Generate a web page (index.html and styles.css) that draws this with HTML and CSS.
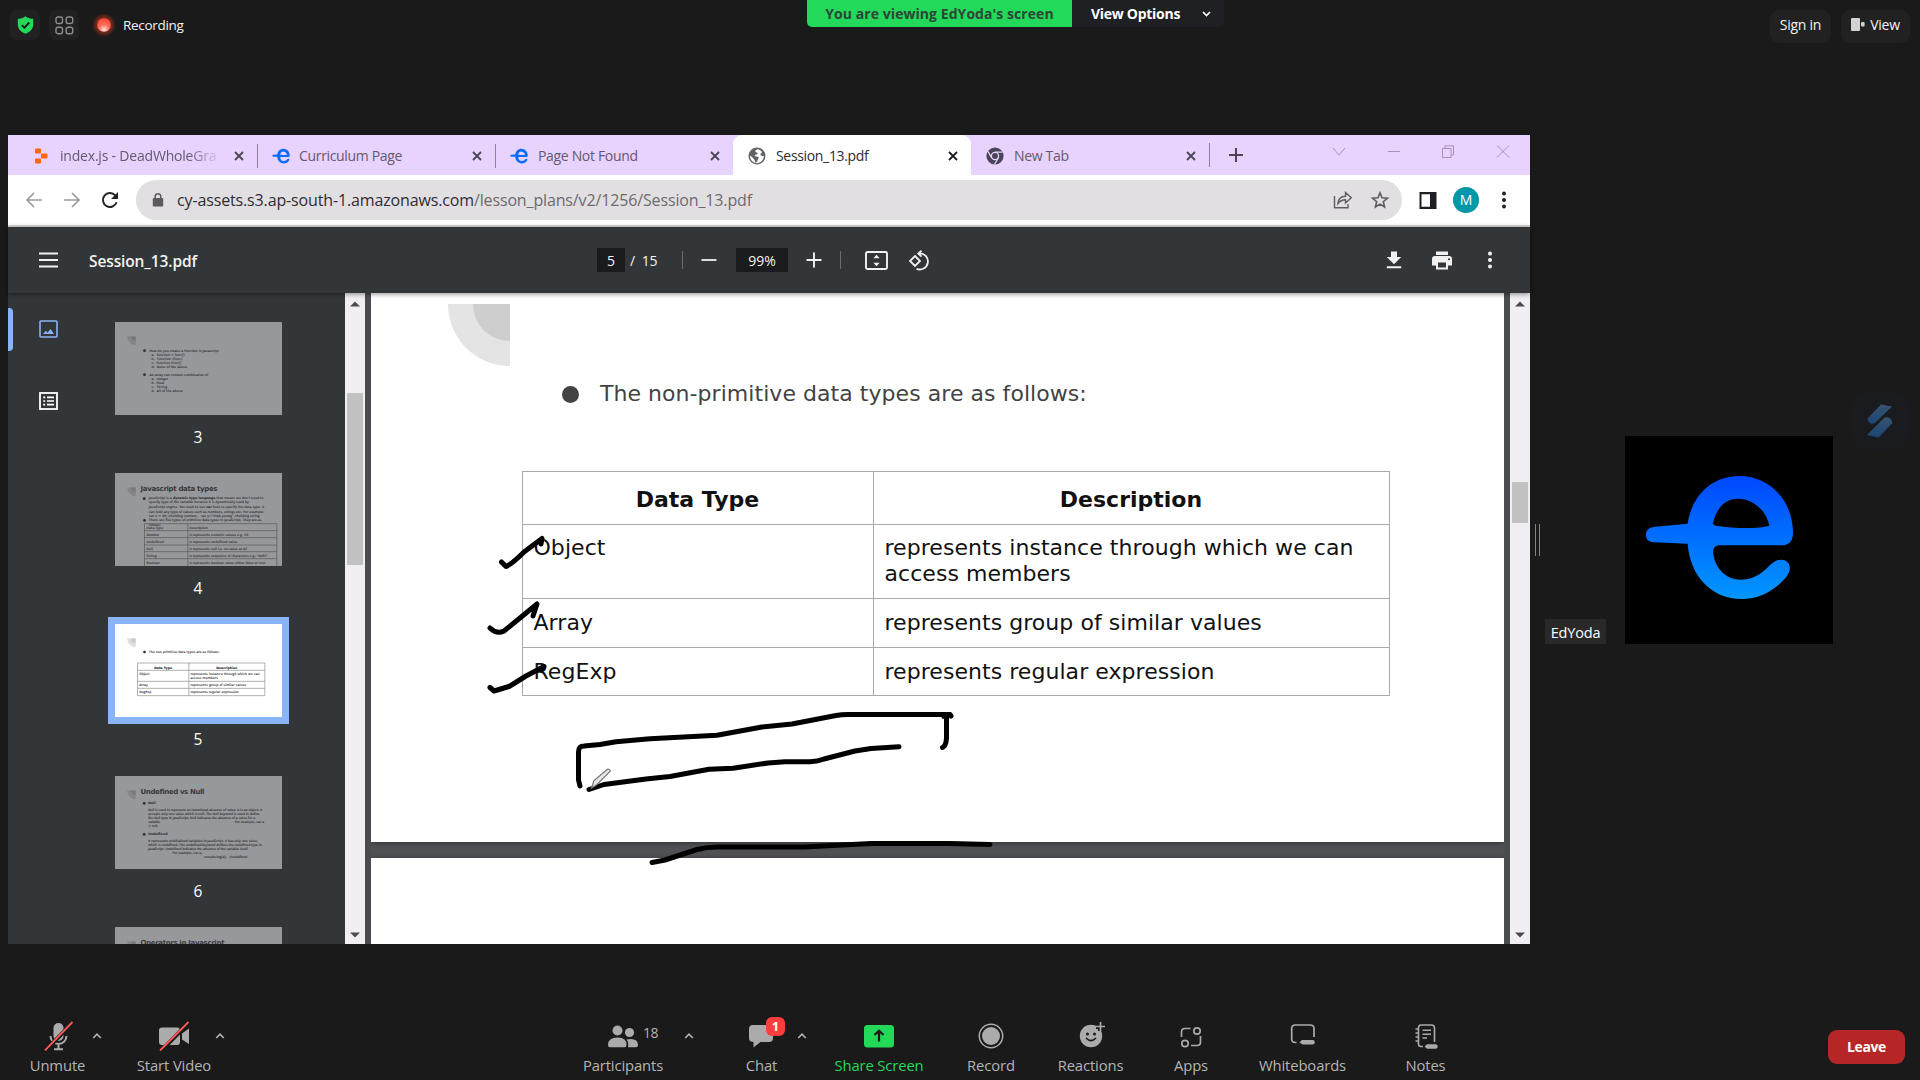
FILE: index.html
```html
<!DOCTYPE html>
<html lang="en">
<head>
<meta charset="utf-8">
<title>Meeting</title>
<link rel="stylesheet" href="styles.css">
</head>
<body>
<svg class="defs" width="0" height="0" aria-hidden="true">
  <defs>
    <linearGradient id="eg" x1="0" y1="0" x2="0" y2="1"><stop offset="0" stop-color="#0048ff"/><stop offset="1" stop-color="#0096ff"/></linearGradient>
    <linearGradient id="sg" x1="0" y1="0" x2="0" y2="1"><stop offset="0" stop-color="#38526a"/><stop offset="1" stop-color="#1b4677"/></linearGradient>
    <radialGradient id="rg" cx=".5" cy=".85" r=".8"><stop offset="0" stop-color="#ffe3dc"/><stop offset=".5" stop-color="#ff6a58"/><stop offset="1" stop-color="#ff4a3c"/></radialGradient>
    <radialGradient id="rh"><stop offset=".4" stop-color="#a5331d"/><stop offset="1" stop-color="#a5331d" stop-opacity="0"/></radialGradient>
    <symbol id="edyoda" viewBox="0 0 624 624"><path fill-rule="evenodd" d="M188 263C200 180 260 120 342 120C440 120 504 200 504 290C504 315 492 328 470 328L285 328C268 328 263 338 265 355C272 400 305 431 345 431C378 431 404 420 432 390C455 368 477 366 490 381C499 396 495 412 475 433C440 468 400 489 350 489C260 489 195 420 188 323L90 319C70 318 63 310 63 296C63 280 75 273 90 272ZM263 264C275 215 300 188 338 188C385 188 425 225 433 269C400 279 330 278 272 269Z"/></symbol>
    <symbol id="x" viewBox="0 0 10 10"><path d="M1 1 9 9M9 1 1 9" fill="none" stroke="currentColor" stroke-width="1.8"/></symbol>
    <symbol id="dots" viewBox="0 0 4 18"><g fill="currentColor"><circle cx="2" cy="2.5" r="2"/><circle cx="2" cy="9" r="2"/><circle cx="2" cy="15.5" r="2"/></g></symbol>
    <symbol id="up" viewBox="0 0 10 6"><path d="M1.2 5 5 1.2 8.800 5" fill="none" stroke="#b4b4b4" stroke-width="1.6"/></symbol>
    <symbol id="corner" viewBox="0 0 26 27"><path d="M0 0H26V27C12 27 0 14 0 0Z" opacity=".5"/><path d="M11 0H26V15C17 15 11 8 11 0Z" opacity=".6"/></symbol>
  </defs>
</svg>

<header class="meeting-top">
  <div class="top-left">
    <span class="chip chip-shield"><svg width="17" height="18" viewBox="0 0 17 18"><path d="M8.500.3C6 2.200 3.500 2.800.800 2.800V8.500C.800 13 4 16 8.500 17.700C13 16 16.200 13 16.200 8.500V2.800C13.500 2.800 11 2.200 8.500.3Z" fill="#23d959"/><path d="M4.800 9.200 7.500 11.700 12.200 6.500" fill="none" stroke="#1a1a1a" stroke-width="1.9"/></svg></span>
    <span class="chip chip-grid"><svg width="19" height="19" viewBox="0 0 19 19" fill="none" stroke="#8d8d8d" stroke-width="1.400"><rect x="1" y="1" width="6.500" height="6.500" rx="2"/><rect x="11.200" y="1" width="6.500" height="6.500" rx="2"/><rect x="1" y="11.200" width="6.500" height="6.500" rx="2"/><rect x="11.200" y="11.200" width="6.500" height="6.500" rx="2"/></svg></span>
    <svg class="rec" width="28" height="28" viewBox="0 0 28 28"><circle cx="14" cy="14" r="12" fill="url(#rh)"/><circle cx="14" cy="14" r="6.800" fill="url(#rg)"/></svg>
    <span class="rec-text">Recording</span>
  </div>
  <div class="banner">
    <div class="banner-green"><span>You are viewing EdYoda's screen</span></div>
    <div class="banner-opt"><span>View Options</span><svg width="9" height="6" viewBox="0 0 9 6"><path d="M1 1 4.500 4.500 8 1" fill="none" stroke="#fff" stroke-width="1.700"/></svg></div>
  </div>
  <div class="top-right">
    <span class="pill signin">Sign in</span>
    <span class="pill view"><svg width="14" height="13" viewBox="0 0 14 13" fill="#d2d2d2"><rect width="9" height="13" rx="1"/><rect x="10" y="4" width="3.600" height="4.600" rx="1"/></svg><span>View</span></span>
  </div>
</header>

<main class="stage">
  <section class="browser">
    <div class="tabs">
      <div class="tab first"><svg class="fav" width="18" height="18" viewBox="0 0 18 18" fill="#fb6410"><rect x="3" y="1.500" width="6" height="5" rx="1"/><rect x="9" y="6.500" width="6.500" height="5" rx="1"/><rect x="3" y="11.500" width="6" height="5" rx="1"/></svg><span class="tab-title fade">index.js - DeadWholeGra</span><svg class="x" width="10" height="10"><use href="#x"/></svg></div>
      <div class="tab"><svg class="fav" width="18" height="18" viewBox="55 95 455 415" fill="#0a6cff"><use href="#edyoda" width="624" height="624"/></svg><span class="tab-title">Curriculum Page</span><svg class="x" width="10" height="10"><use href="#x"/></svg></div>
      <div class="tab nosep third"><svg class="fav" width="18" height="18" viewBox="55 95 455 415" fill="#0a6cff"><use href="#edyoda" width="624" height="624"/></svg><span class="tab-title">Page Not Found</span><svg class="x" width="10" height="10"><use href="#x"/></svg></div>
      <div class="tab active"><svg class="fav" width="18" height="18" viewBox="0 0 18 18"><circle cx="9" cy="9" r="8.500" fill="#5f6368"/><path d="M9.500 2.200C7 3 6.500 4.500 8.500 5.500C11 6.500 9 8 7 7.800C6 9.500 8 9.500 10 9.800C11.500 10.500 10 12 9.500 13.500C9 15 8 16 7.200 15.700C7.500 13 5.500 12 4.500 10.500L2 8.600C1.800 12 4 15.500 8 16.200C12.500 16.300 16 13 15.800 9C14.500 8.800 13 9 12.500 8C12 6.500 14 6 14 5C13 3.500 11.500 2.500 9.500 2.200Z" fill="#fff"/></svg><span class="tab-title">Session_13.pdf</span><svg class="x" width="10" height="10"><use href="#x"/></svg></div>
      <div class="tab nosep"><svg class="fav" width="18" height="18" viewBox="0 0 18 18"><circle cx="9" cy="9" r="8.600" fill="#4a4458"/><circle cx="9" cy="9" r="3.600" fill="none" stroke="#e8d2fe" stroke-width="1.300"/><path d="M9 5.200H16.500M5.700 10.900 2 4.400M12.300 10.900 8.600 17.300" stroke="#e8d2fe" stroke-width="1.200"/></svg><span class="tab-title">New Tab</span><svg class="x" width="10" height="10"><use href="#x"/></svg></div>
      <i class="endsep"></i>
      <svg class="plus" width="16" height="16" viewBox="0 0 16 16"><path d="M8 1V15M1 8H15" stroke="#4c4453" stroke-width="2"/></svg>
      <div class="winctl">
        <svg width="14" height="13" viewBox="0 0 14 13"><path d="M1 3 7 10 13 3"/></svg>
        <svg width="14" height="13" viewBox="0 0 14 13"><path d="M1 6.500H13"/></svg>
        <svg width="14" height="13" viewBox="0 0 14 13"><path d="M1.500 3.500H10V12.500H1.500ZM4 3V.8H12.500V10H10"/></svg>
        <svg width="14" height="13" viewBox="0 0 14 13"><path d="M1 .5 13 12.500M13 .5 1 12.500"/></svg>
      </div>
    </div>

    <div class="navbar">
      <svg class="nav-back" width="18" height="16" viewBox="0 0 18 16" fill="none" stroke="#9b9b9f" stroke-width="1.700"><path d="M17 8H2M9 1 2 8 9 15"/></svg>
      <svg class="nav-fwd" width="18" height="16" viewBox="0 0 18 16" fill="none" stroke="#9b9b9f" stroke-width="1.700"><path d="M1 8H16M9 1 16 8 9 15"/></svg>
      <svg class="nav-reload" width="18" height="18" viewBox="0 0 18 18"><path d="M15.600 11.200A7 7 0 1 1 14.200 4.300" fill="none" stroke="#232226" stroke-width="2"/><path d="M17 1V8H10Z" fill="#232226"/></svg>
      <div class="omnibox">
        <svg width="12" height="14" viewBox="0 0 12 14"><rect x=".8" y="5" width="10.400" height="8.600" rx="1" fill="#5b595f"/><path d="M3.200 5.500V3.600A2.800 2.800 0 0 1 8.800 3.600V5.500" fill="none" stroke="#5b595f" stroke-width="1.500"/></svg>
        <span class="url">cy-assets.s3.ap-south-1.amazonaws.com<span>/lesson_plans/v2/1256/Session_13.pdf</span></span>
        <svg class="share" width="20" height="18" viewBox="0 0 20 18" fill="none" stroke="#5f5d63" stroke-width="1.400"><path d="M1.500 5V16.700H15V13"/><path d="M5 12.500C5.200 8 8 5.500 12.500 5.300V1.500L18.300 6.800 12.500 12V8.700C9 8.700 7 9.700 5 12.500Z"/></svg>
        <svg class="star" width="18" height="18" viewBox="0 0 18 18" fill="none" stroke="#5f5d63" stroke-width="1.600"><path d="M9 1.800 11 6.800 16.400 7.200 12.300 10.700 13.600 16 9 13.100 4.400 16 5.700 10.700 1.600 7.200 7 6.800Z"/></svg>
      </div>
      <svg class="panel" width="18" height="17" viewBox="0 0 18 17"><path fill-rule="evenodd" d="M.5 0H17.500V17H.5ZM2.500 2.200V14.800H11V2.200Z" fill="#1f1e24"/></svg>
      <span class="avatar">M</span>
      <svg class="menu" width="4" height="18" color="#232226"><use href="#dots"/></svg>
    </div>

    <div class="pdfbar">
      <svg class="burger" width="19" height="16" viewBox="0 0 19 16"><path d="M0 1.500H19M0 8H19M0 14.500H19" stroke="#f1f1f1" stroke-width="2.200"/></svg>
      <span class="pdf-title">Session_13.pdf</span>
      <span class="pg">5</span><span class="of">/&nbsp; 15</span>
      <i class="vr"></i>
      <svg class="minus" width="16" height="16" viewBox="0 0 16 16"><path d="M.5 8H15.500" stroke="#f1f1f1" stroke-width="1.800"/></svg>
      <span class="zoom">99%</span>
      <svg class="pplus" width="16" height="16" viewBox="0 0 16 16"><path d="M.5 8H15.500M8 .5V15.500" stroke="#f1f1f1" stroke-width="1.900"/></svg>
      <i class="vr vr2"></i>
      <svg class="fit" width="23" height="19" viewBox="0 0 23 19"><rect x="1" y="1" width="21" height="17" rx="1.500" fill="none" stroke="#f1f1f1" stroke-width="1.900"/><path d="M11.500 3.700 14.600 7.300H8.400ZM11.500 15.300 14.600 11.700H8.400Z" fill="#f1f1f1"/></svg>
      <svg class="rot" width="22" height="21" viewBox="0 0 22 21" fill="none" stroke="#f1f1f1" stroke-width="1.800"><path d="M7 6 12 11 7 16 2 11ZM11 3.500A8 8 0 1 1 8.500 18.700M13.500.8 10.300 3.600 13.500 6.600"/></svg>
      <svg class="dl" width="16" height="18" viewBox="0 0 16 18" fill="#f1f1f1"><path d="M5 .5H11V6H15.200L8 13.200.8 6H5ZM.8 15.300H15.200V17.300H.8Z"/></svg>
      <svg class="print" width="20" height="19" viewBox="0 0 20 19" fill="#f1f1f1"><path d="M4 .5H16V4H4Z"/><path fill-rule="evenodd" d="M3 5H17A3 3 0 0 1 20 8V14.500H16V18.500H4V14.500H0V8A3 3 0 0 1 3 5ZM6 11.500V16.500H14V11.500ZM17 7.200A1 1 0 1 0 17 9.300 1 1 0 1 0 17 7.200Z"/></svg>
      <svg class="pmenu" width="4" height="18" color="#f1f1f1"><use href="#dots"/></svg>
    </div>

    <div class="viewer">
      <nav class="rail">
        <span class="rail-on"></span>
        <svg class="r1" width="19" height="18" viewBox="0 0 19 18"><rect x="1" y="1" width="17" height="16" rx="1" fill="none" stroke="#8ab4f8" stroke-width="1.600"/><path d="M4 14 6.800 10.800 8.500 12.800 11.500 9 15 14Z" fill="#8ab4f8"/></svg>
        <svg class="r2" width="19" height="18" viewBox="0 0 19 18" fill="none" stroke="#fff"><rect x="1" y="1" width="17" height="16" stroke-width="1.800"/><path d="M4.200 5.300H6.200M4.200 9H6.200M4.200 12.700H6.200M8 5.300H15M8 9H15M8 12.700H15" stroke-width="1.700"/></svg>
      </nav>
      <div class="thumbs">
        <figure>
          <svg class="th" viewBox="0 0 500 279"><use href="#corner" x="36" y="43" width="26" height="27" fill="#707174"/>
            <g class="tt"><circle cx="88" cy="86" r="4"/><text x="103" y="89" textLength="208">How do you create a function in Javascript</text><text x="109" y="101" textLength="99">a. &#160;function = func()</text><text x="109" y="113" textLength="93">b. &#160;function (func)</text><text x="109" y="125" textLength="89">c. &#160;function func()</text><text x="109" y="137" textLength="107">d. &#160;None of the above</text><circle cx="88" cy="158" r="4"/><text x="103" y="161" textLength="176">An array can contain combination of</text><text x="109" y="173" textLength="50">a. &#160;Integer</text><text x="109" y="185" textLength="38">b. &#160;Float</text><text x="109" y="197" textLength="47">c. &#160;String</text><text x="109" y="209" textLength="94">d. &#160;All of the above</text></g></svg>
          <figcaption>3</figcaption>
        </figure>
        <figure>
          <svg class="th" viewBox="0 0 500 279"><use href="#corner" x="36" y="43" width="26" height="27" fill="#707174"/>
            <text class="hd" x="76" y="54" textLength="231">Javascript data types</text>
            <g class="tt"><circle cx="87" cy="77" r="4"/><text x="101" y="79" textLength="344">JavaScript is a <tspan font-weight="700">dynamic type language</tspan> that means we don't need to</text><text x="101" y="91" textLength="300">specify type of the variable because it is dynamically used by</text><text x="101" y="105" textLength="346">JavaScript engine. You need to use <tspan font-weight="700">var</tspan> here to specify the data type. It</text><text x="101" y="119" textLength="346">can hold any type of values such as numbers, strings etc. For example:</text><text x="101" y="132" textLength="332">var x = 40; //holding number, &#160; var y="Prak-young" //holding string</text><circle cx="88" cy="142" r="4"/><text x="101" y="145" textLength="338">There are five types of primitive data types in JavaScript. They are as</text><text x="101" y="158" textLength="36">follows:</text>
            <text x="94" y="168" textLength="50">Data Type</text><text x="223" y="168" textLength="55">Description</text><text x="94" y="188" textLength="38">Number</text><text x="223" y="188" textLength="176">It represents numeric values e.g. 50</text><text x="94" y="210" textLength="52">Undefined</text><text x="223" y="210" textLength="143">It represents undefined value</text><text x="94" y="231" textLength="19">Null</text><text x="223" y="231" textLength="172">It represents null i.e. no value at all</text><text x="94" y="252" textLength="30">String</text><text x="223" y="252" textLength="234">It represents sequence of characters e.g. "delhi"</text><text x="94" y="273" textLength="40">Boolean</text><text x="223" y="273" textLength="228">It represents boolean value either false or true</text></g>
            <path d="M88 279V152H485V279M218 152V279M88 173H485M88 194H485M88 216H485M88 236H485M88 257H485" fill="none" stroke="#56575a" stroke-width="2"/></svg>
          <figcaption>4</figcaption>
        </figure>
        <figure class="sel">
          <svg class="th" viewBox="0 0 500 279"><use href="#corner" x="36" y="43" width="26" height="27" fill="#bdbdbd"/>
            <g class="tt"><circle cx="88" cy="84" r="4"/><text x="101" y="87" textLength="212">The non-primitive data types are as follows:</text><text x="117" y="134" textLength="54" font-weight="700">Data Type</text><text x="303" y="134" textLength="63" font-weight="700">Description</text><text x="72" y="154" textLength="31">Object</text><text x="226" y="154" textLength="207">represents instance through which we can</text><text x="226" y="166" textLength="82">access members</text><text x="72" y="186" textLength="26">Array</text><text x="226" y="186" textLength="167">represents group of similar values</text><text x="72" y="207" textLength="36">RegExp</text><text x="226" y="207" textLength="145">represents regular expression</text></g>
            <path d="M67 117H449V215H67ZM221 117V215M67 139H449M67 172H449M67 193H449" fill="none" stroke="#8a8a8a" stroke-width="2"/></svg>
          <figcaption>5</figcaption>
        </figure>
        <figure>
          <svg class="th" viewBox="0 0 500 279"><use href="#corner" x="36" y="43" width="26" height="27" fill="#707174"/>
            <text class="hd" x="76" y="55" textLength="192">Undefined vs Null</text>
            <g class="tt"><circle cx="87" cy="82" r="4"/><text x="99" y="85" textLength="22" font-weight="700">Null</text><text x="99" y="104" textLength="342">Null is used to represent an intentional absence of value. It is an object. It</text><text x="99" y="118" textLength="334">accepts only one value which is null. The Null keyword is used to define</text><text x="99" y="130" textLength="321">the Null type in JavaScript. Null indicates the absence of a value for a</text><text x="99" y="142" textLength="38">variable.</text><text x="359" y="142" textLength="88">For example, var a</text><text x="99" y="154" textLength="30">= null;</text><circle cx="87" cy="175" r="4"/><text x="99" y="178" textLength="58" font-weight="700">Undefined</text><text x="99" y="198" textLength="327">It represents uninitialized variables in JavaScript. It has only one value</text><text x="99" y="211" textLength="341">which is undefined. The undefined keyword defines the undefined type in</text><text x="99" y="223" textLength="300">JavaScript. Undefined indicates the absence of the variable itself.</text><text x="172" y="235" textLength="89">For example, var a;</text><text x="266" y="247" textLength="130">console.log(a); &#160; //undefined</text></g></svg>
          <figcaption>6</figcaption>
        </figure>
        <figure>
          <svg class="th" viewBox="0 0 500 279"><use href="#corner" x="36" y="43" width="26" height="27" fill="#707174"/><text class="hd" x="76" y="55" textLength="252">Operators in Javascript</text></svg>
        </figure>
      </div>
      <div class="scroll s-left"><svg width="10" height="6" viewBox="0 0 10 6"><path d="M0 5.500 5 .5 10 5.500Z"/></svg><i></i><svg width="10" height="6" viewBox="0 0 10 6"><path d="M0 .5 5 5.500 10 .5Z"/></svg></div>
      <div class="doc">
        <article class="page">
          <svg class="deco" width="62" height="62" viewBox="0 0 62 62"><path d="M0 0H62V62C27 62 0 34 0 0Z" fill="#e4e4e4"/><path d="M25 0H62V37C41 37 25 20 25 0Z" fill="#cecece"/></svg>
          <p class="bullet">The non-primitive data types are as follows:</p>
          <table>
            <tr class="h"><th>Data Type</th><th>Description</th></tr>
            <tr class="o"><td>Object</td><td>represents instance through which we can access members</td></tr>
            <tr class="a"><td>Array</td><td>represents group of similar values</td></tr>
            <tr class="r"><td>RegExp</td><td>represents regular expression</td></tr>
          </table>
        </article>
        <article class="page next"></article>
      </div>
      <div class="scroll s-right"><svg width="10" height="6" viewBox="0 0 10 6"><path d="M0 5.500 5 .5 10 5.500Z"/></svg><i></i><svg width="10" height="6" viewBox="0 0 10 6"><path d="M0 .5 5 5.500 10 .5Z"/></svg></div>
      <svg class="ink" width="700" height="400" viewBox="400 500 700 400">
        <g fill="none" stroke="#000" stroke-width="5" stroke-linecap="round" stroke-linejoin="round">
          <path d="M501.500 562 506 566.500C512 564 518 558 524 552L542 538.500 541 544"/>
          <path d="M490 628C494 632 499 633.500 504 631L520 618 537 604 533 616"/>
          <path d="M490 687.500 494 691 509 686.500 526 676 544 666.500 542 669"/>
          <path d="M580 786 578.500 780V752C578.500 748 580 746 584 746L600 744.500 616 741.800 650 738.700 717 735.200 762 727 792 724 836 715.500Q841 714.500 848 714.500H950L951 716"/>
          <path d="M944 716.500H946.500V738Q946 746 942.500 747.500"/>
          <path d="M589 789.500 604 784.500 646 779 670 776.500 709 769.300 733 768.200 768 763 785 761.700H810Q818 761.300 824 759L855 751 871 748.500 899 746.700"/>
          <path d="M652 862.500 665 860 697 849.500Q708 846.500 721 847H804L871 843.500H950L990 844.500"/>
        </g>
        <path d="M591.500 788 594 780.500 606.500 770Q609 768 610.500 771L597 784.500Z" fill="#e6e6e6" stroke="#777" stroke-width="1.200"/>
      </svg>
    </div>
  </section>
  <div class="grip"></div>
  <aside class="video">
    <span class="name">EdYoda</span>
    <div class="tile"><svg width="208" height="208" fill="url(#eg)"><use href="#edyoda" width="208" height="208"/></svg></div>
    <div class="widget"><svg width="28" height="34" viewBox="0 0 28 34" fill="url(#sg)"><path d="M15 .5 26 2.500 9.500 18.500C5 22 1.500 18 1.500 14.500Z"/><path d="M18 14C22 11.500 27 15 26 19.500L12.500 33.500 1 31Z"/></svg></div>
  </aside>
</main>

<footer class="controls">
  <div class="ctl c-mute"><svg width="32" height="32" viewBox="0 0 32 32"><rect x="11.500" y="3" width="10" height="18" rx="5" fill="#ababab"/><path d="M8.500 16A8 8 0 0 0 24.500 16M16.500 24V29M12 29.300H21" fill="none" stroke="#ababab" stroke-width="2"/><path d="M4 30 31.500 2" stroke="#1a1a1a" stroke-width="4"/><path d="M3 30.300 30.500 2" stroke="#ff5a58" stroke-width="1.800"/></svg><b>Unmute</b></div>
  <svg class="caret" width="10" height="6"><use href="#up"/></svg>
  <div class="ctl c-video"><svg width="32" height="32" viewBox="0 0 32 32"><rect x="1" y="7.500" width="21" height="17.500" rx="3" fill="#ababab"/><path d="M24 13.500 31 8.500V24L24 19.500Z" fill="#ababab"/><path d="M3 31 31.500 2" stroke="#1a1a1a" stroke-width="4"/><path d="M2 30.500 30.500 2" stroke="#ff5a58" stroke-width="1.800"/></svg><b>Start Video</b></div>
  <svg class="caret" width="10" height="6"><use href="#up"/></svg>
  <div class="ctl c-part"><svg width="32" height="32" viewBox="0 0 32 32" fill="#ababab"><circle cx="10.500" cy="10.500" r="5"/><circle cx="22.500" cy="12.500" r="4.600"/><path d="M1 25Q1 17.500 10.500 17.500T19.500 25Q19.500 27.300 17.500 27.300H3Q1 27.300 1 25ZM21 27.300Q22 22.500 19.500 19.500 31 17.500 31 25.300 31 27.300 29 27.300Z"/></svg><em>18</em><b>Participants</b></div>
  <svg class="caret ca3" width="10" height="6"><use href="#up"/></svg>
  <div class="ctl c-chat"><svg width="32" height="32" viewBox="0 0 32 32"><path d="M7 5H23Q27 5 27 9V18Q27 22 23 22H14.500L7.500 27.500V22Q3 22 3 18V9Q3 5 7 5Z" fill="#ababab"/></svg><i class="badge">1</i><b>Chat</b></div>
  <svg class="caret ca4" width="10" height="6"><use href="#up"/></svg>
  <div class="ctl c-share"><svg width="32" height="32" viewBox="0 0 32 32"><rect x="1" y="5" width="30" height="22.500" rx="3.500" fill="#23d959"/><path d="M16 21.500V11M11.500 15 16 10.700 20.500 15" fill="none" stroke="#1a1a1a" stroke-width="2.200"/></svg><b>Share Screen</b></div>
  <div class="ctl c-rec"><svg width="32" height="32" viewBox="0 0 32 32"><circle cx="16" cy="16" r="11.700" fill="none" stroke="#ababab" stroke-width="1.500"/><circle cx="16" cy="16" r="9" fill="#ababab"/></svg><b>Record</b></div>
  <div class="ctl c-react"><svg width="32" height="32" viewBox="0 0 32 32"><circle cx="16" cy="16" r="11.200" fill="#ababab"/><circle cx="12.500" cy="14" r="1.500" fill="#1a1a1a"/><circle cx="19.500" cy="14" r="1.500" fill="#1a1a1a"/><path d="M11 18Q16 23 21 18" fill="none" stroke="#1a1a1a" stroke-width="1.700"/><path d="M25.500 2V11M21 6.500H30" stroke="#1a1a1a" stroke-width="5"/><path d="M25.500 2V11M21 6.500H30" stroke="#ababab" stroke-width="1.700"/></svg><b>Reactions</b></div>
  <div class="ctl c-apps"><svg width="32" height="32" viewBox="0 0 32 32" fill="none" stroke="#ababab" stroke-width="1.700"><path d="M6.500 17V12Q6.500 8.500 10 8.500H15.500M25.500 16V22Q25.500 25.500 22 25.500H16"/><circle cx="22" cy="11" r="3.200"/><circle cx="10" cy="23.500" r="3.200"/></svg><b>Apps</b></div>
  <div class="ctl c-wb"><svg width="32" height="32" viewBox="0 0 32 32"><path d="M9.500 22.500H8.500Q4.700 22.500 4.700 19V8.500Q4.700 5 8.500 5H23Q27 5 27 8.500V17" fill="none" stroke="#ababab" stroke-width="1.700"/><path d="M15 20H25.500Q27.800 20 27.800 22.300T25.500 24.600H15.500L12.500 22.300Z" fill="#ababab"/></svg><b>Whiteboards</b></div>
  <div class="ctl c-notes"><svg width="32" height="32" viewBox="0 0 32 32"><path d="M13 26.500H11Q8.500 26.500 8.500 24V8Q8.500 5 11 5H21.500Q24.500 5 24.500 8V22" fill="none" stroke="#ababab" stroke-width="1.600"/><path d="M5.500 9H9M5.500 13H9M5.500 17H9M5.500 21H9M12.500 10.300H21M12.500 14.200H21M12.500 18H17" stroke="#ababab" stroke-width="1.400"/><path d="M17 24.300H25.500Q27.700 24.300 27.700 26.500T25.500 28.700H17L14.500 26.500Z" fill="#ababab"/></svg><b>Notes</b></div>
  <button class="leave">Leave</button>
</footer>
</body>
</html>
```
FILE: styles.css
```css
* { box-sizing: border-box; }
body { margin: 0; width: 1920px; height: 1080px; overflow: hidden; background: #1a1a1a; font-family: "Open Sans", "Noto Sans", sans-serif; font-size: 14px; display: flex; flex-direction: column; }
svg { display: block; flex: none; }
.defs { position: absolute; }

/* meeting header */
.meeting-top { height: 135px; flex: none; display: grid; grid-template-columns: 807px 417px 1fr; color: #f2f2f2; }
.top-left { display: flex; align-items: center; height: 30px; margin: 10px 0 0 10px; }
.chip { width: 30px; height: 30px; border-radius: 7px; background: #212121; display: flex; align-items: center; justify-content: center; }
.chip-grid { margin-left: 9px; }
.rec { margin-left: 11px; }
.rec-text { margin-left: 5px; font-size: 13.5px; letter-spacing: -.3px; }
.banner { display: flex; height: 27px; border-radius: 0 0 5px 5px; overflow: hidden; font-weight: 700; font-size: 14px; white-space: nowrap; }
.banner-green { width: 265px; background: #23d959; color: #2b4638; text-align: center; line-height: 27px; letter-spacing: .06px; }
.banner-opt { width: 152px; background: #1f2023; color: #fff; display: flex; align-items: center; padding: 0 13px 0 19px; justify-content: space-between; letter-spacing: -.28px; }
.top-right { display: flex; justify-content: flex-end; padding: 10px 10px 0 0; gap: 10px; letter-spacing: -.25px; }
.pill { height: 33px; border-radius: 9px; background: #212121; display: flex; align-items: center; justify-content: center; gap: 5px; padding-bottom: 4px; font-size: 14px; }
.signin { width: 61px; }
.view { width: 69px; }

/* shared screen and side panel */
.stage { display: flex; height: 809px; flex: none; padding-left: 8px; }
.browser { width: 1522px; display: flex; flex-direction: column; background: #fff; }
.tabs { height: 40px; background: #e8d2fe; display: flex; align-items: center; padding-left: 12px; }
.tab { width: 238px; height: 40px; display: flex; align-items: center; padding: 1px 14px 0 14px; color: #635a6e; font-size: 14px; letter-spacing: -.33px; background: linear-gradient(#8d8199, #8d8199) no-repeat right 9px / 1px 24px; }
.tab.nosep, .tab.active { background-image: none; }
.tab.active { background-color: #fff; color: #2d2b31; border-radius: 9px 9px 0 0; margin: 0 1px 0 -1px; padding: 1px 13px 0 15px; }
.tab.first .fav { margin-left: -2px; }
.tab.first .tab-title { margin-left: 10px; }
.tab-title { margin-left: 9px; flex: 1; white-space: nowrap; overflow: hidden; padding-bottom: 1px; }
.tab.third .tab-title, .tab.active .tab-title, .tab:nth-child(5) .tab-title { margin-left: 10px; }
.fade { -webkit-mask-image: linear-gradient(90deg, #000 128px, transparent 162px); flex: 0 0 160px; letter-spacing: -.2px; }
.first .x { margin-left: auto; }
.tab .x { color: #4c4453; }
.tab.active .x { color: #1f1e24; }
.endsep { width: 1px; height: 24px; background: #8d8199; margin-left: -1px; }
.plus { margin-left: 18px; }
.winctl { margin: 0 20px 7px auto; display: flex; gap: 40.700px; }
.winctl svg { fill: none; stroke: #a892b4; stroke-width: 1; }
.navbar { height: 52px; border-bottom: 2px solid #d9d7da; display: flex; align-items: center; padding-left: 17px; }
.nav-fwd { margin-left: 20px; }
.nav-reload { margin-left: 20px; }
.omnibox { width: 1266px; height: 40px; margin-left: 17px; border-radius: 20px; background: #e2dfe2; display: flex; align-items: center; padding: 0 13px 0 16px; }
.url { margin-left: 13px; font-size: 16px; letter-spacing: -.14px; color: #2f2d33; white-space: nowrap; }
.url span { color: #6c6a70; }
.share { margin-left: auto; }
.star { margin-left: 18px; }
.panel { margin-left: 17px; }
.avatar { width: 26px; height: 26px; border-radius: 50%; background: #0097a7; color: #fff; text-align: center; line-height: 26px; margin-left: 16px; font-size: 14px; }
.menu { margin-left: 23px; }

/* document toolbar */
.pdfbar { height: 66px; background: #323639; color: #f3f3f3; display: flex; align-items: center; padding-left: 32px; font-size: 14px; position: relative; z-index: 2; box-shadow: 0 1px 5px rgba(0,0,0,.45); }
.pdf-title { width: 508px; margin-left: 31px; font-size: 15.500px; font-weight: 600; letter-spacing: -.12px; padding-top: 2px; }
.burger { margin-left: -1px; }
.pg, .zoom { background: #191b1c; height: 24px; line-height: 26px; text-align: center; }
.pg { width: 28px; }
.of { width: 28px; margin-left: 5px; white-space: nowrap; letter-spacing: -.2px; padding-top: 1px; }
.vr { width: 1px; height: 18px; background: #6c6f72; margin-left: 24px; }
.minus { margin-left: 18px; }
.zoom { width: 52px; margin-left: 19px; letter-spacing: -.1px; }
.pplus { margin-left: 18px; }
.vr2 { margin-left: 18px; }
.fit { margin-left: 24px; }
.rot { margin-left: 20px; }
.dl { margin-left: 456px; }
.print { margin-left: 30px; }
.pmenu { margin-left: 35.500px; }

/* document viewer */
.viewer { flex: 1; min-height: 0; display: flex; background: #4a4c50; position: relative; }
.rail { width: 100px; background: #323639; position: relative; padding: 27px 0 0 31px; }
.rail-on { position: absolute; left: 0; top: 15px; width: 5px; height: 43px; background: #8ab4f8; border-radius: 0 4px 4px 0; }
.r2 { margin-top: 54px; }
.thumbs { width: 237px; background: #323639; overflow: hidden; padding: 29px 0 0 7px; }
figure { margin: 0; height: 151.200px; width: 167px; }
.th { width: 167px; height: 93px; background: #97989b; overflow: hidden; }
.sel .th { background: #fff; outline: 7px solid #8ab4f8; }
figcaption { text-align: center; color: #fff; font-size: 15.500px; line-height: 22px; margin: 11px 1px 0 0; }
.tt { font-family: "DejaVu Sans", sans-serif; font-size: 9.500px; fill: #303134; stroke: #303134; stroke-width: .3px; }
.hd { font-family: "DejaVu Sans", sans-serif; font-size: 21px; font-weight: 700; fill: #38393c; }
.scroll { background: #f1eff3; display: flex; flex-direction: column; align-items: center; padding: 8px 0 6px; fill: #4d4b50; }
.scroll svg:last-child { margin-top: auto; }
.scroll i { width: 16px; background: #c1c1c1; }
.s-left { width: 20px; }
.s-left i { height: 172px; margin-top: 86px; }
.s-right { width: 20px; margin-left: 6px; }
.s-right i { height: 41px; margin-top: 175px; }
.doc { width: 1133px; margin-left: 6px; overflow: hidden; display: flex; flex-direction: column; gap: 16px; background: #4f5155; }
.page { height: 549px; flex: none; background: #fff; padding: 11px 0 0 77px; font-family: "DejaVu Sans", sans-serif; font-size: 22px; color: #111; box-shadow: 0 1px 5px #333; }
.bullet { margin: 10px 0 0 152px; line-height: 36px; color: #434343; display: flex; align-items: center; white-space: nowrap; letter-spacing: .05px; }
.bullet::before { content: ""; width: 17px; height: 17px; border-radius: 50%; background: #434343; margin: 1px 21px 0 -38px; }
table { margin: 59px 0 0 74px; width: 868px; border-collapse: collapse; table-layout: fixed; line-height: 26px; }
th:first-child { width: 351px; }
th, td { border: 1px solid #a9a9a9; padding: 0; }
th { vertical-align: middle; padding: 3px 1px 0 0; }
td { vertical-align: top; text-align: left; padding: 10px 0 0 10.500px; letter-spacing: .05px; }
.a td, .r td { padding-top: 11px; }
.h { height: 53px; } .o { height: 74px; } .a { height: 49px; } .r { height: 48px; }
.ink { position: absolute; left: 392px; top: 207px; z-index: 3; }

/* side video */
.grip { width: 5px; height: 32px; margin: 389px 0 0 5px; border: solid #858585; border-width: 0 1.500px; }
.video { display: flex; align-items: flex-end; height: 509px; margin-left: 5px; }
.name { width: 61px; height: 25px; background: #292929; color: #fff; text-align: center; line-height: 27px; font-size: 14.500px; letter-spacing: -.2px; }
.tile { width: 208px; height: 208px; margin-left: 19px; background: #000; }
.widget { width: 58px; height: 58px; margin: 0 0 194px 18px; border-radius: 16px; background: #191b1f; display: flex; align-items: center; justify-content: center; }

/* meeting controls */
.controls { height: 136px; display: flex; padding: 76px 0 0 26px; color: #b4b4b4; }
.ctl { display: flex; flex-direction: column; align-items: center; position: relative; white-space: nowrap; letter-spacing: -.12px; }
.ctl b { font-weight: 400; font-size: 14.800px; line-height: 20px; margin-top: 3px; }
.caret { margin: 13px 3px 0; }
.ca3 { margin-left: 19px; }
.ca4 { margin-left: 14px; }
.c-mute { width: 63px; }
.c-video { width: 76px; margin-left: 31px; }
.c-part { width: 84px; margin-left: 353px; }
.c-chat { width: 43px; margin-left: 43px; }
.c-share { width: 88px; margin-left: 25px; color: #23d959; }
.c-rec { width: 50px; margin-left: 43px; }
.c-react { width: 65px; margin-left: 42px; }
.c-apps { width: 34px; margin-left: 51px; }
.c-wb { width: 87px; margin-left: 51px; }
.c-notes { width: 41px; margin-left: 59px; }
.ctl em { position: absolute; left: 62px; top: 4px; font-style: normal; line-height: 18px; font-size: 14px; letter-spacing: -.6px; }
.badge { position: absolute; left: 26px; top: -3px; width: 19px; height: 19px; border-radius: 6px; background: #ff3d3d; color: #fff; font-style: normal; font-weight: 700; text-align: center; line-height: 19px; font-size: 13px; }
.leave { margin: 10px 15px 0 auto; width: 77px; height: 34px; border: 0; border-radius: 9px; background: #b72626; color: #fff; font: 700 14px/34px "Open Sans", sans-serif; letter-spacing: -.4px; padding: 0; }
```
